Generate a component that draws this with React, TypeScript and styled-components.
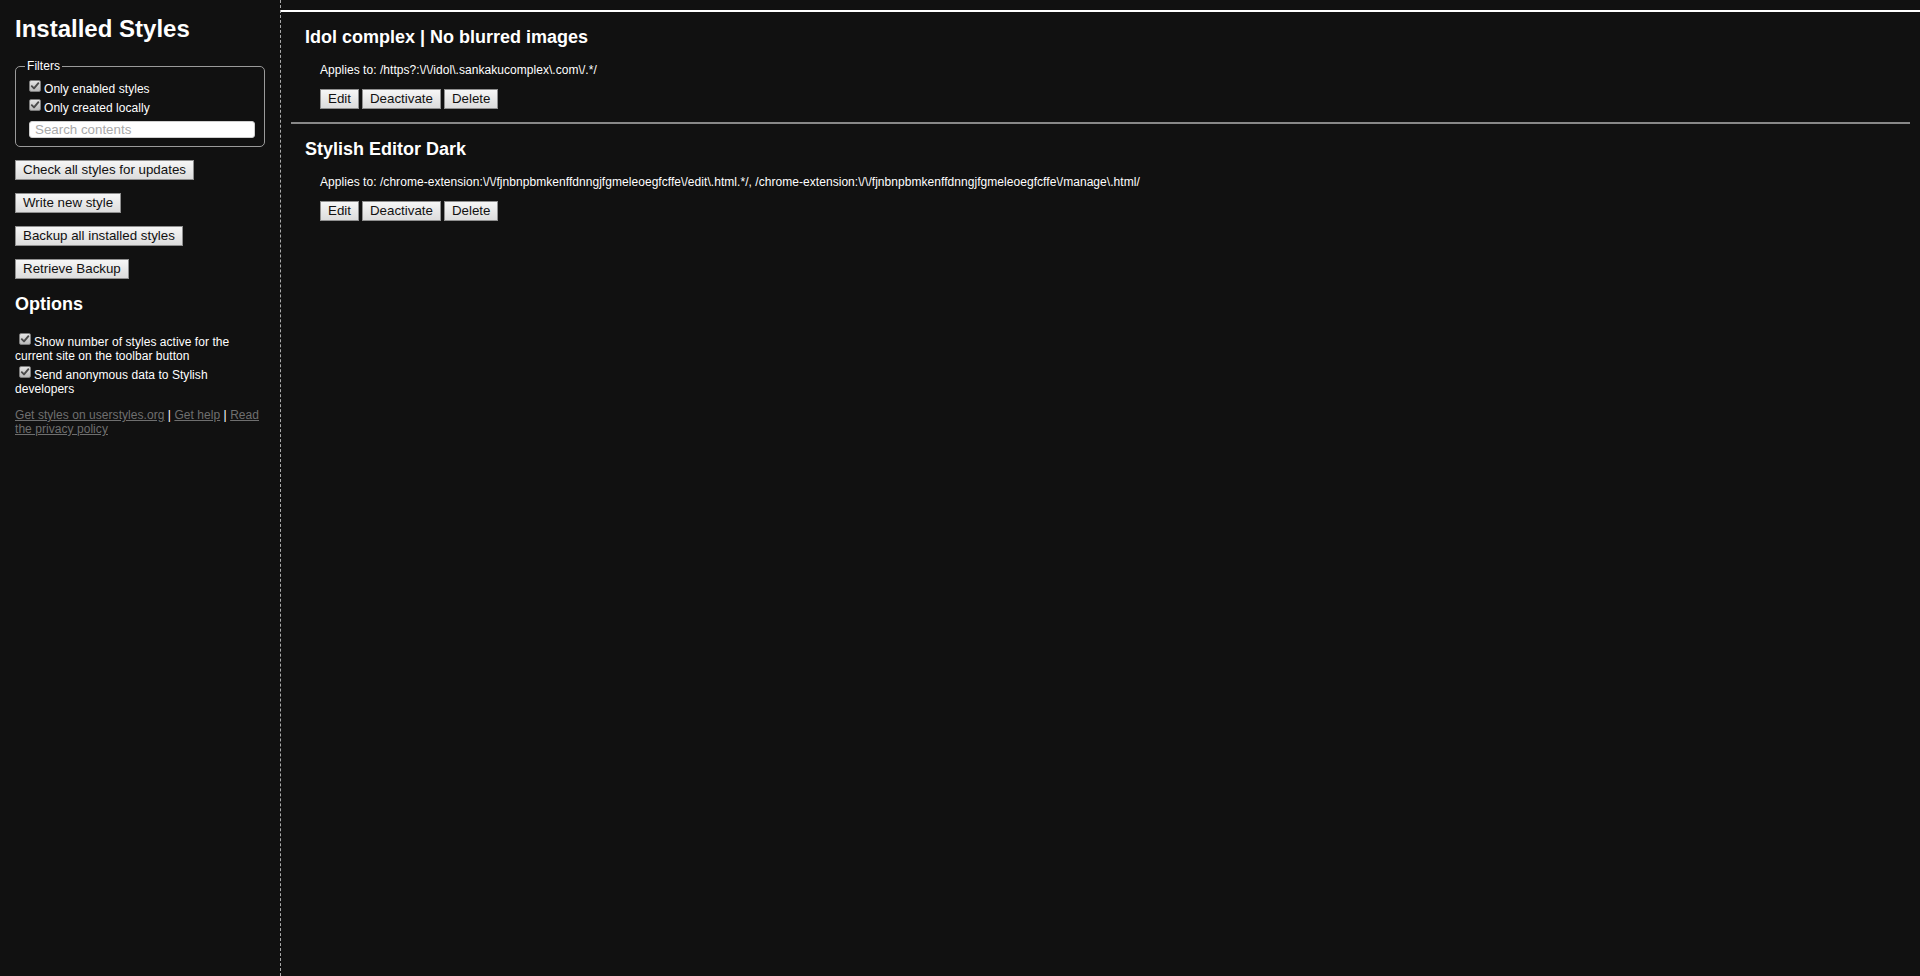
import React from "react";
import styled, { createGlobalStyle } from "styled-components";

const GlobalStyle = createGlobalStyle`
  html, body {
    margin: 0;
    padding: 0;
    background: #111111;
  }
  body {
    font: 12px "Liberation Sans", Arial, sans-serif;
    letter-spacing: 0.05px;
    color: #ffffff;
  }
  * { box-sizing: border-box; }
`;

const Page = styled.div`
  display: flex;
  min-height: 100vh;
  background: #111111;
`;

const Sidebar = styled.aside`
  flex: 0 0 281px;
  width: 281px;
  min-height: 100vh;
  padding: 15px;
  border-right: 1px dashed #aaaaaa;
`;

const Title = styled.h1`
  margin: 0 0 16px;
  font-size: 24px;
  font-weight: bold;
  letter-spacing: 0;
  color: #ffffff;
`;

const Filters = styled.fieldset`
  margin: 0;
  width: 250px;
  padding: 4px 9px 8px;
  border: 1px solid #9a9a9a;
  border-radius: 5px;
`;

const Legend = styled.legend`
  padding: 0 2px;
  color: #ffffff;
`;

const CheckRow = styled.label`
  display: block;
  color: #ffffff;
`;

const CheckBox = styled.span`
  display: inline-block;
  width: 12px;
  height: 12px;
  margin: 3px 3px 1px 4px;
  border: 1px solid #7c7c7c;
  border-radius: 2px;
  background: linear-gradient(#e4e4e4, #b9b9b9);
  vertical-align: baseline;

  svg {
    display: block;
  }
`;

const Search = styled.input`
  display: block;
  width: 226px;
  height: 17px;
  margin: 6px 0 0 4px;
  padding: 0 5px;
  border: 1px solid #cfcfcf;
  border-radius: 3px;
  background: #ffffff;
  font: 13.333px "Liberation Sans", Arial, sans-serif;
  color: #000;
  outline: none;

  &::placeholder {
    color: #a9a9a9;
  }
`;

const ActionStack = styled.div`
  display: flex;
  flex-direction: column;
  align-items: flex-start;
  gap: 13px;
  margin-top: 13px;
`;

const Button = styled.button`
  height: 20px;
  padding: 0 7px;
  border: 1px solid #8f8f8f;
  border-radius: 0;
  background: linear-gradient(#f6f6f6, #dcdcdc);
  color: #111111;
  font: 13.333px "Liberation Sans", Arial, sans-serif;
  letter-spacing: 0;
  line-height: 18px;
  white-space: nowrap;
  cursor: pointer;
`;

const SectionTitle = styled.h2`
  margin: 15px 0 15px;
  font-size: 18px;
  font-weight: bold;
  letter-spacing: 0;
  color: #ffffff;
`;

const Option = styled.label`
  display: block;
  color: #ffffff;
`;

const Links = styled.p`
  margin: 12px 0 0;
  color: #ffffff;
`;

const Link = styled.a`
  color: #6f6f6f;
  text-decoration: underline;
`;

const Main = styled.main`
  flex: 1;
  padding-top: 10px;
`;

const EntryList = styled.div`
  border-top: 2px solid #ffffff;
`;

const Entry = styled.section`
  padding: 15px 24px 13px;
`;

const EntryTitle = styled.h2`
  margin: 0 0 15px;
  font-size: 18px;
  font-weight: bold;
  letter-spacing: 0;
  color: #ffffff;
`;

const AppliesTo = styled.div`
  padding-left: 15px;
  color: #ffffff;
  word-break: break-word;
`;

const EntryActions = styled.div`
  display: flex;
  gap: 3px;
  margin-top: 12px;
  padding-left: 15px;
`;

const Divider = styled.hr`
  margin: 0 10px;
  height: 2px;
  border: 0;
  background: #888888;
`;

const Check: React.FC = () => (
  <CheckBox aria-hidden="true">
    <svg width="10" height="10" viewBox="0 0 10 10">
      <path
        d="M1.8 5.2 L4 7.4 L8.4 2.2"
        fill="none"
        stroke="#4a4a4a"
        strokeWidth="1.9"
        strokeLinecap="round"
        strokeLinejoin="round"
      />
    </svg>
  </CheckBox>
);

const entries = [
  {
    name: "Idol complex | No blurred images",
    applies: "Applies to: /https?:\\/\\/idol\\.sankakucomplex\\.com\\/.*/",
  },
  {
    name: "Stylish Editor Dark",
    applies:
      "Applies to: /chrome-extension:\\/\\/fjnbnpbmkenffdnngjfgmeleoegfcffe\\/edit\\.html.*/, /chrome-extension:\\/\\/fjnbnpbmkenffdnngjfgmeleoegfcffe\\/manage\\.html/",
  },
];

export default function App() {
  return (
    <>
      <GlobalStyle />
      <Page>
        <Sidebar>
          <Title>Installed Styles</Title>
          <Filters>
            <Legend>Filters</Legend>
            <CheckRow>
              <Check />
              Only enabled styles
            </CheckRow>
            <CheckRow>
              <Check />
              Only created locally
            </CheckRow>
            <Search type="search" placeholder="Search contents" />
          </Filters>
          <ActionStack>
            <Button>Check all styles for updates</Button>
            <Button>Write new style</Button>
            <Button>Backup all installed styles</Button>
            <Button>Retrieve Backup</Button>
          </ActionStack>
          <SectionTitle>Options</SectionTitle>
          <Option>
            <Check />
            Show number of styles active for the current site on the toolbar button
          </Option>
          <Option>
            <Check />
            Send anonymous data to Stylish developers
          </Option>
          <Links>
            <Link href="#">Get styles on userstyles.org</Link> | <Link href="#">Get help</Link> |{" "}
            <Link href="#">Read the privacy policy</Link>
          </Links>
        </Sidebar>
        <Main>
          <EntryList>
            {entries.map((entry, i) => (
              <React.Fragment key={entry.name}>
                {i > 0 && <Divider />}
                <Entry>
                  <EntryTitle>{entry.name}</EntryTitle>
                  <AppliesTo>{entry.applies}</AppliesTo>
                  <EntryActions>
                    <Button>Edit</Button>
                    <Button>Deactivate</Button>
                    <Button>Delete</Button>
                  </EntryActions>
                </Entry>
              </React.Fragment>
            ))}
          </EntryList>
        </Main>
      </Page>
    </>
  );
}
